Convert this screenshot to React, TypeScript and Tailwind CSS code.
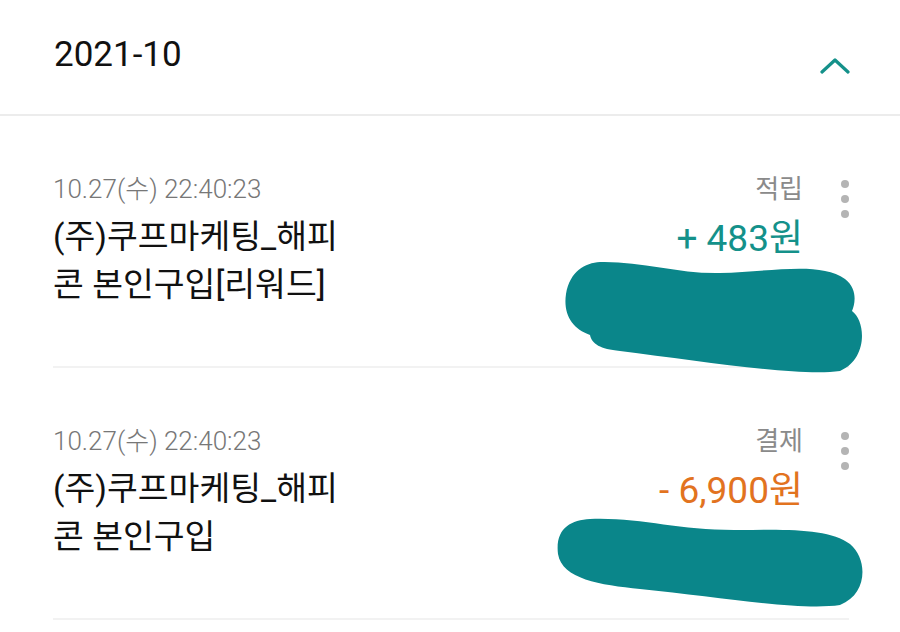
import React from 'react';

interface Item {
  date: string;
  title: string[];
  kind: string;
  amount: string;
  color: string;
  blob: { box: string; w: number; h: number; left: number; top: number; d: string };
}

const items: Item[] = [
  {
    date: '10.27(수) 22:40:23',
    title: ['(주)쿠프마케팅_해피', '콘 본인구입[리워드]'],
    kind: '적립',
    amount: '+ 483원',
    color: 'text-[#14918a]',
    blob: {
      box: '560 258 310 122',
      w: 310,
      h: 122,
      left: 560,
      top: 143,
      d: 'M600 263 C640 262 680 275 720 274 C770 273 820 262 845 280 C858 290 855 305 852 312 C866 322 868 360 840 372 C800 378 700 362 620 352 C600 350 592 345 590 336 C572 330 563 315 566 295 C570 272 585 264 600 263 Z',
    },
  },
  {
    date: '10.27(수) 22:40:23',
    title: ['(주)쿠프마케팅_해피', '콘 본인구입'],
    kind: '결제',
    amount: '- 6,900원',
    color: 'text-[#e2731f]',
    blob: {
      box: '552 514 318 100',
      w: 318,
      h: 100,
      left: 552,
      top: 147,
      d: 'M590 520 C640 518 680 532 740 531 C790 530 830 530 850 545 C868 560 868 595 840 606 C800 612 720 598 640 590 C600 586 562 580 558 555 C555 530 570 521 590 520 Z',
    },
  },
];

export default function App() {
  return (
    <div className="w-[900px] h-[632px] overflow-hidden bg-white font-['Roboto','Noto_Sans_CJK_KR',sans-serif]">
      <div className="h-[116px] flex justify-between border-b-2 border-[#ececec] pl-[54px] pr-[50px]">
        <div className="pt-[33px] text-[35px] leading-[44px] text-[#111]">2021-10</div>
        <div className="pt-[57px]">
          <svg width="30" height="18" viewBox="0 0 30 18" fill="none" stroke="#14918a" strokeWidth="3.2" strokeLinecap="round" strokeLinejoin="round">
            <path d="M2 15 L15 3 L28 15" />
          </svg>
        </div>
      </div>

      {items.map((it, i) => (
        <div key={i} className="relative ml-[53px] mr-[51px] h-[252px] border-b-2 border-[#f2f2f2] flex justify-between pt-[57px]">
          <div>
            <div className="text-[26px] leading-[32px] font-light text-[#777]">{it.date}</div>
            <div className="mt-[8px] text-[33.5px] leading-[48px] text-[#111]">
              {it.title.map((t) => (
                <div key={t}>{t}</div>
              ))}
            </div>
          </div>
          <div className="flex gap-[38px]">
            <div className="flex flex-col items-end">
              <div className="text-[26px] leading-[32px] text-[#8a8a8a]">{it.kind}</div>
              <div className={`mt-[11px] text-[37px] leading-[46px] ${it.color}`}>{it.amount}</div>
            </div>
            <div className="flex flex-col gap-[7px] pt-[7px]">
              <span className="w-[8px] h-[8px] rounded-full bg-[#b4b4b4]" />
              <span className="w-[8px] h-[8px] rounded-full bg-[#b4b4b4]" />
              <span className="w-[8px] h-[8px] rounded-full bg-[#b4b4b4]" />
            </div>
          </div>
          <svg
            className="absolute"
            style={{ left: it.blob.left - 53, top: it.blob.top - 2 }}
            width={it.blob.w}
            height={it.blob.h}
            viewBox={it.blob.box}
          >
            <path d={it.blob.d} fill="#0a868a" />
          </svg>
        </div>
      ))}
    </div>
  );
}
